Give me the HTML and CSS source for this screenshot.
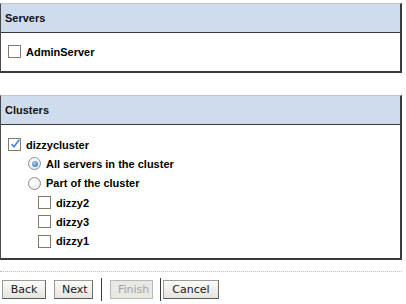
FILE: index.html
```html
<!DOCTYPE html>
<html>
<head>
<meta charset="utf-8">
<link rel="stylesheet" href="styles.css">
</head>
<body>
<div class="page">
  <section class="panel">
    <div class="panel-head">Servers</div>
    <div class="panel-body servers-body">
      <div class="row lvl0"><span class="cb"></span><span class="lbl">AdminServer</span></div>
    </div>
  </section>

  <section class="panel clusters">
    <div class="panel-head">Clusters</div>
    <div class="panel-body clusters-body">
      <div class="row lvl0"><span class="cb checked"><svg viewBox="0 0 12 12" width="12" height="12"><path d="M2.5 6.2 L5 8.8 L10.2 1.8" fill="none" stroke="#3f86d9" stroke-width="1.6"/></svg></span><span class="lbl">dizzycluster</span></div>
      <div class="row lvl1"><span class="radio on"></span><span class="lbl">All servers in the cluster</span></div>
      <div class="row lvl1"><span class="radio"></span><span class="lbl">Part of the cluster</span></div>
      <div class="row lvl2"><span class="cb"></span><span class="lbl">dizzy2</span></div>
      <div class="row lvl2"><span class="cb"></span><span class="lbl">dizzy3</span></div>
      <div class="row lvl2"><span class="cb"></span><span class="lbl">dizzy1</span></div>
    </div>
  </section>

  <div class="divider"></div>

  <div class="buttons">
    <button class="btn btn-back">Back</button>
    <button class="btn btn-next">Next</button>
    <span class="sep"></span>
    <button class="btn btn-finish" disabled>Finish</button>
    <span class="sep sep2"></span>
    <button class="btn btn-cancel">Cancel</button>
  </div>
</div>
</body>
</html>
```

FILE: styles.css
```css
html, body {
  margin: 0;
  padding: 0;
  background: #ffffff;
}
.page {
  width: 402px;
  padding-top: 3px;
  font-family: "Liberation Sans", Arial, sans-serif;
  font-size: 11px;
  color: #000;
}
.panel {
  border-top: 1px solid #c4c4c4;
  border-left: 1px solid #4a4a4a;
  border-right: 2px solid #3a3a3a;
  border-bottom: 2px solid #3a3a3a;
  background: #fff;
}
.clusters {
  margin-top: 22px;
}
.panel-head {
  background: #cfdcee;
  height: 28px;
  line-height: 28px;
  padding-left: 4px;
  font-weight: bold;
  color: #111;
  border-bottom: 1px solid #3a3a3a;
}
.panel-body {
  padding-top: 9px;
}
.servers-body {
  height: 29px;
}
.clusters-body {
  padding-top: 10px;
  height: 123px;
}
.row {
  display: flex;
  align-items: center;
  height: 19.3px;
  font-weight: bold;
}
.lvl0 { padding-left: 7px; }
.lvl1 { padding-left: 27px; }
.lvl2 { padding-left: 37px; }
.cb {
  width: 11px;
  height: 11px;
  border: 1px solid #85796b;
  background: #fff;
  margin-right: 5px;
  position: relative;
}
.cb svg {
  position: absolute;
  left: 0;
  top: -1px;
}
.radio {
  width: 11px;
  height: 11px;
  border: 1px solid #8d8d8d;
  border-radius: 50%;
  background: radial-gradient(circle at 40% 35%, #ffffff 0%, #f0f0f0 60%, #dcdcdc 100%);
  margin-right: 5px;
  position: relative;
}
.radio.on::after {
  content: "";
  position: absolute;
  left: 2.5px;
  top: 2.5px;
  width: 6px;
  height: 6px;
  border-radius: 50%;
  background: radial-gradient(circle at 40% 35%, #a9d0f8 0%, #4a8fdc 60%, #2f6fc0 100%);
}
.lbl {
  white-space: nowrap;
}
.divider {
  margin-top: 11px;
  border-top: 1px dotted #b9b9b9;
  width: 402px;
}
.buttons {
  display: flex;
  align-items: center;
  margin-top: 6px;
  padding-left: 2px;
}
.btn {
  font-family: "DejaVu Sans", sans-serif;
  font-size: 11px;
  height: 19px;
  padding: 0 7px;
  border: 1px solid #7a7a7a;
  border-color: #9a9a9a #6a6a6a #5a5a5a #9a9a9a;
  background: linear-gradient(#fbfbf9, #e6e4de);
  color: #1a1a1a;
  margin: 0;
  border-radius: 0;
  line-height: 17px;
}
.btn-back { width: 44px; }
.btn-next { width: 39px; margin-left: 8px; }
.btn-finish {
  width: 43px;
  color: #a3a3a3;
  background: #e8e8e4;
  border-color: #b9b9b3;
}
.btn-cancel { width: 56px; }
.sep {
  width: 1px;
  height: 23px;
  background: #3a3a3a;
  margin: 0 8px 0 8px;
}
.sep2 {
  margin: 0 2px 0 7px;
}
```
